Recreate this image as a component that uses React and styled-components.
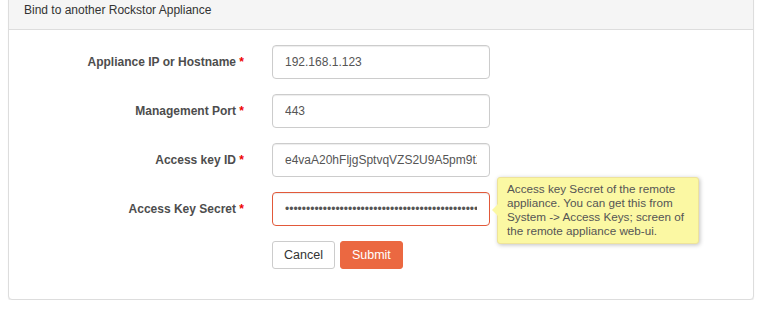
import React, { useState } from 'react';
import styled, { createGlobalStyle } from 'styled-components';

const GlobalStyle = createGlobalStyle`
  html, body {
    margin: 0;
    padding: 0;
    background: #fff;
    font-family: 'Liberation Sans', Arial, Helvetica, sans-serif;
    color: #333;
  }
`;

const fields = [
  { name: 'ip', label: 'Appliance IP or Hostname', value: '192.168.1.123' },
  { name: 'port', label: 'Management Port', value: '443' },
  { name: 'keyId', label: 'Access key ID', value: 'e4vaA20hFljgSptvqVZS2U9A5pm9tXq3' },
  {
    name: 'secret',
    label: 'Access Key Secret',
    value: 'kQ8s1pLx0Zr7Yb3Nw2Vd6Hm9Tc4Ja5Fe0Ug8Io1Ks7Pq2Wn3Lr',
    type: 'password',
    focused: true,
    tip: 'Access key Secret of the remote appliance. You can get this from System -> Access Keys; screen of the remote appliance web-ui.',
  },
];

const App = () => {
  const [inputs, setInputs] = useState(
    fields.reduce((acc, f) => ({ ...acc, [f.name]: f.value }), {})
  );

  const handleChange = (e) => {
    const { name, value } = e.target;
    setInputs({ ...inputs, [name]: value });
  };

  return (
    <>
      <GlobalStyle />
      <Page>
        <Panel>
          <PanelHeading>Bind to another Rockstor Appliance</PanelHeading>
          <PanelBody>
            {fields.map((f) => (
              <FormRow key={f.name}>
                <Label htmlFor={f.name}>
                  {f.label} <Required>*</Required>
                </Label>
                <Field>
                  <Input
                    id={f.name}
                    name={f.name}
                    type={f.type || 'text'}
                    value={inputs[f.name]}
                    onChange={handleChange}
                    $focused={f.focused}
                  />
                  {f.tip && <Tip>{f.tip}</Tip>}
                </Field>
              </FormRow>
            ))}
            <FormRow>
              <span />
              <Actions>
                <Button type="button">Cancel</Button>
                <Button type="submit" $primary>
                  Submit
                </Button>
              </Actions>
            </FormRow>
          </PanelBody>
        </Panel>
      </Page>
    </>
  );
};

export default App;

const Page = styled.div`
  padding: 0 13px 0 8px;
  margin-top: -11px;
`;

const Panel = styled.div`
  border: 1px solid #ddd;
  border-radius: 4px;
  background: #fff;
  box-shadow: 0 1px 1px rgba(0, 0, 0, 0.08);
`;

const PanelHeading = styled.div`
  background: #f5f5f5;
  border-bottom: 1px solid #ddd;
  border-radius: 3px 3px 0 0;
  padding: 10px 15px 9px;
  font-size: 12px;
  line-height: 20px;
  color: #333;
`;

const PanelBody = styled.div`
  padding: 15px 15px 15px;
`;

const FormRow = styled.div`
  display: grid;
  grid-template-columns: 220px 218px;
  column-gap: 28px;
  align-items: center;
  margin-bottom: 15px;
`;

const Label = styled.label`
  text-align: right;
  font-size: 12px;
  font-weight: bold;
  color: #4d4d4d;
`;

const Required = styled.span`
  color: #e00;
`;

const Field = styled.div`
  position: relative;
`;

const Input = styled.input`
  display: block;
  box-sizing: border-box;
  width: 100%;
  height: 34px;
  padding: 6px 12px;
  font-family: 'Liberation Sans', Arial, sans-serif;
  font-size: 12px;
  color: #555;
  background: #fff;
  border: 1px solid ${(p) => (p.$focused ? '#e2593a' : '#ccc')};
  border-radius: 4px;
  box-shadow: inset 0 1px 1px rgba(0, 0, 0, 0.075);
  outline: none;
`;

const Tip = styled.div`
  position: absolute;
  left: 225px;
  top: -15px;
  width: 184px;
  padding: 4px 7px 5px 9px;
  background: #fbf8a3;
  border: 1px solid #eee39a;
  border-radius: 3px;
  box-shadow: 1px 1px 4px rgba(0, 0, 0, 0.25);
  font-size: 11.7px;
  line-height: 14px;
  color: #555;

  &:before {
    content: '';
    position: absolute;
    left: -6px;
    top: 26px;
    border-style: solid;
    border-width: 6px 6px 6px 0;
    border-color: transparent #fbf8a3 transparent transparent;
  }
`;

const Actions = styled.div`
  display: flex;
  gap: 5px;
`;

const Button = styled.button`
  box-sizing: border-box;
  height: 28px;
  padding: 0 11px;
  font-family: 'Liberation Sans', Arial, sans-serif;
  font-size: 12.5px;
  border-radius: 3px;
  cursor: pointer;
  color: ${(p) => (p.$primary ? '#fff' : '#333')};
  background: ${(p) => (p.$primary ? '#eb6841' : '#fff')};
  border: 1px solid ${(p) => (p.$primary ? '#eb6841' : '#ccc')};
`;
